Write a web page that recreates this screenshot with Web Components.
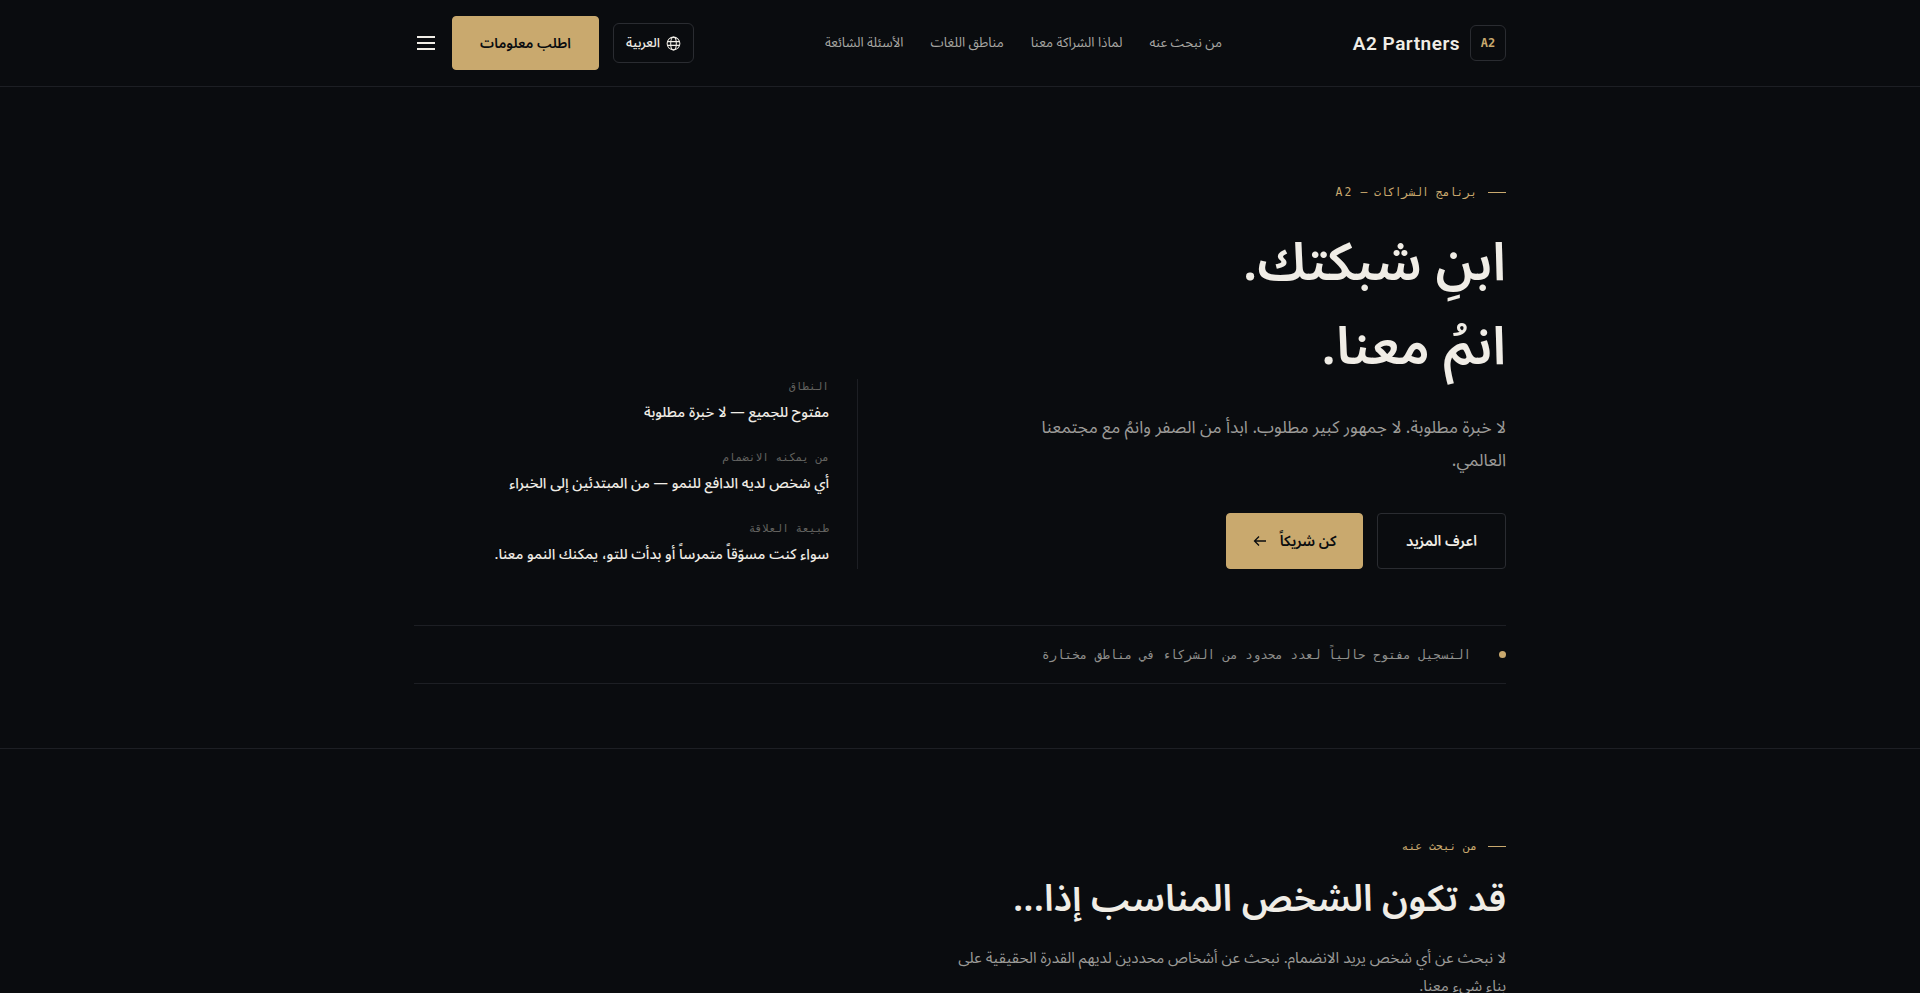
<!DOCTYPE html>
<html lang="ar" dir="rtl">
<head>
<meta charset="utf-8">
<title>A2 Partners</title>
<style>
  html, body { margin: 0; height: 100%; overflow: hidden; background: #0a0c0f; }
  body {
    color: #f0ede6;
    font-family: "Noto Sans Arabic", "Noto Sans", "DejaVu Sans", sans-serif;
    --gold: #c9a96e;
    --line: #1d1f24;
    --mono: "DejaVu Sans Mono", "Liberation Mono", monospace;
  }
</style>
</head>
<body>
<site-header></site-header>
<hero-section></hero-section>
<seek-section></seek-section>

<script>
class A2Button extends HTMLElement {
  constructor() {
    super();
    this.attachShadow({ mode: "open" });
    this.shadowRoot.innerHTML = `
      <style>
        :host {
          display: inline-flex;
          align-items: center;
          justify-content: center;
          gap: 13px;
          box-sizing: border-box;
          height: 56px;
          border-radius: 4px;
          font-size: 14.5px;
          font-weight: 600;
          color: #f0ede6;
          border: 1px solid #2a2c31;
          white-space: nowrap;
        }
        :host([primary]) {
          background: var(--gold);
          border-color: var(--gold);
          color: #0a0c0f;
        }
      </style>
      <slot></slot>
    `;
  }
}
customElements.define("a2-button", A2Button);

class EyeBrow extends HTMLElement {
  constructor() {
    super();
    this.attachShadow({ mode: "open" });
    this.shadowRoot.innerHTML = `
      <style>
        :host {
          display: flex;
          align-items: center;
          gap: 11px;
          font-family: var(--mono);
          font-size: 11.4px;
          line-height: 15px;
          letter-spacing: 2.2px;
          color: var(--gold);
        }
        .dash { width: 18px; height: 1px; background: var(--gold); }
      </style>
      <span class="dash"></span>
      <span><slot></slot></span>
    `;
  }
}
customElements.define("eye-brow", EyeBrow);

class SiteHeader extends HTMLElement {
  constructor() {
    super();
    this.attachShadow({ mode: "open" });
    this.shadowRoot.innerHTML = `
      <style>
        :host { display: block; border-bottom: 1px solid var(--line); }
        .wrap {
          width: 1092px;
          height: 86px;
          margin: 0 auto;
          display: flex;
          align-items: center;
          justify-content: space-between;
        }
        .logo { display: flex; align-items: center; gap: 10px; }
        .mark {
          width: 36px;
          height: 36px;
          box-sizing: border-box;
          border: 1px solid #2a2c31;
          border-radius: 6px;
          display: flex;
          align-items: center;
          justify-content: center;
          font-family: var(--mono);
          font-size: 12px;
          font-weight: 700;
          color: var(--gold);
        }
        .name {
          font-family: Roboto, sans-serif;
          font-size: 19px;
          font-weight: 600;
          letter-spacing: .5px;
          direction: ltr;
        }
        nav { display: flex; gap: 27px; font-size: 13.3px; color: #a8a7a3; }
        .tools { display: flex; align-items: center; gap: 14px; }
        .lang {
          display: flex;
          align-items: center;
          gap: 6px;
          box-sizing: border-box;
          height: 40px;
          width: 81px;
          justify-content: center;
          border: 1px solid #2a2c31;
          border-radius: 6px;
          font-size: 13px;
          font-weight: 500;
        }
        .cta { width: 147px; height: 54px; font-size: 14px; }
        .burger { margin-right: 3px; margin-left: 3px; display: block; }
      </style>
      <div class="wrap">
        <div class="logo">
          <span class="mark">A2</span>
          <span class="name">A2 Partners</span>
        </div>
        <nav>
          <span>من نبحث عنه</span>
          <span>لماذا الشراكة معنا</span>
          <span>مناطق اللغات</span>
          <span>الأسئلة الشائعة</span>
        </nav>
        <div class="tools">
          <span class="lang">
            <svg width="15" height="15" viewBox="0 0 16 16" fill="none" stroke="#f0ede6" stroke-width="1.1">
              <circle cx="8" cy="8" r="6.8"/>
              <ellipse cx="8" cy="8" rx="3" ry="6.8"/>
              <path d="M1.6 6h12.8M1.6 10h12.8"/>
            </svg>
            العربية
          </span>
          <a2-button primary class="cta">اطلب معلومات</a2-button>
          <svg class="burger" width="18" height="14" viewBox="0 0 18 14" stroke="#f0ede6" stroke-width="2">
            <path d="M0 1h18M0 7h18M0 13h18"/>
          </svg>
        </div>
      </div>
    `;
  }
}
customElements.define("site-header", SiteHeader);

class FactItem extends HTMLElement {
  constructor() {
    super();
    this.attachShadow({ mode: "open" });
    this.shadowRoot.innerHTML = `
      <style>
        :host { display: block; }
        .label {
          font-family: var(--mono);
          font-size: 11.1px;
          letter-spacing: 1.5px;
          color: #62625f;
          line-height: 16px;
        }
        .value {
          margin-top: 6px;
          font-size: 14.45px;
          font-weight: 500;
          line-height: 24px;
          color: #f0ede6;
        }
      </style>
      <div class="label">${this.getAttribute("label")}</div>
      <div class="value"><slot></slot></div>
    `;
  }
}
customElements.define("fact-item", FactItem);

class HeroSection extends HTMLElement {
  constructor() {
    super();
    this.attachShadow({ mode: "open" });
    this.shadowRoot.innerHTML = `
      <style>
        :host { display: block; border-bottom: 1px solid var(--line); }
        .wrap { width: 1092px; margin: 0 auto; padding: 98px 0 64px; }
        .grid {
          display: grid;
          grid-template-columns: 1fr 444px;
          gap: 64px;
          align-items: end;
        }
        h1 {
          margin: 21px 0 0;
          font-size: 52.8px;
          font-weight: 600;
          line-height: 84px;
          color: #f0ede6;
        }
        p {
          margin: 22px 0 0;
          max-width: 480px;
          font-size: 17.2px;
          line-height: 33px;
          color: #9c9b98;
        }
        .actions { margin-top: 36px; display: flex; gap: 14px; }
        .actions a2-button:first-child { width: 129px; }
        .actions a2-button:last-child { width: 137px; }
        .facts {
          border-right: 1px solid var(--line);
          padding: 0 28px 2px 0;
          display: flex;
          flex-direction: column;
          gap: 25px;
        }
        .notice {
          margin-top: 56px;
          height: 57px;
          border-top: 1px solid var(--line);
          border-bottom: 1px solid var(--line);
          display: flex;
          align-items: center;
          gap: 28px;
          font-family: var(--mono);
          font-size: 12.5px;
          color: #8f8f8c;
        }
        .dot { width: 7px; height: 7px; border-radius: 50%; background: var(--gold); }
      </style>
      <div class="wrap">
        <div class="grid">
          <div>
            <eye-brow>برنامج الشراكات — A2</eye-brow>
            <h1>ابنِ شبكتك.<br>انمُ معنا.</h1>
            <p>لا خبرة مطلوبة. لا جمهور كبير مطلوب. ابدأ من الصفر وانمُ مع مجتمعنا العالمي.</p>
            <div class="actions">
              <a2-button>اعرف المزيد</a2-button>
              <a2-button primary>
                كن شريكاً
                <svg width="14" height="12" viewBox="0 0 14 12" fill="none" stroke="#0a0c0f" stroke-width="1.3">
                  <path d="M13 6H1.5M6 1.5 1.5 6 6 10.5"/>
                </svg>
              </a2-button>
            </div>
          </div>
          <div class="facts">
            <fact-item label="النطاق">مفتوح للجميع — لا خبرة مطلوبة</fact-item>
            <fact-item label="من يمكنه الانضمام">أي شخص لديه الدافع للنمو — من المبتدئين إلى الخبراء</fact-item>
            <fact-item label="طبيعة العلاقة">سواء كنت مسوّقاً متمرساً أو بدأت للتو، يمكنك النمو معنا.</fact-item>
          </div>
        </div>
        <div class="notice">
          <span class="dot"></span>
          <span>التسجيل مفتوح حالياً لعدد محدود من الشركاء في مناطق مختارة</span>
        </div>
      </div>
    `;
  }
}
customElements.define("hero-section", HeroSection);

class SeekSection extends HTMLElement {
  constructor() {
    super();
    this.attachShadow({ mode: "open" });
    this.shadowRoot.innerHTML = `
      <style>
        :host { display: block; }
        .wrap { width: 1092px; margin: 0 auto; padding: 90px 0 40px; }
        h2 {
          margin: 17px 0 0;
          font-size: 36.8px;
          font-weight: 600;
          line-height: 56px;
        }
        p {
          margin: 17px 0 0;
          max-width: 560px;
          font-size: 15.2px;
          line-height: 28px;
          color: #9c9b98;
        }
      </style>
      <div class="wrap">
        <eye-brow>من نبحث عنه</eye-brow>
        <h2>قد تكون الشخص المناسب إذا...</h2>
        <p>لا نبحث عن أي شخص يريد الانضمام. نبحث عن أشخاص محددين لديهم القدرة الحقيقية على بناء شيء معنا.</p>
      </div>
    `;
  }
}
customElements.define("seek-section", SeekSection);
</script>
</body>
</html>
